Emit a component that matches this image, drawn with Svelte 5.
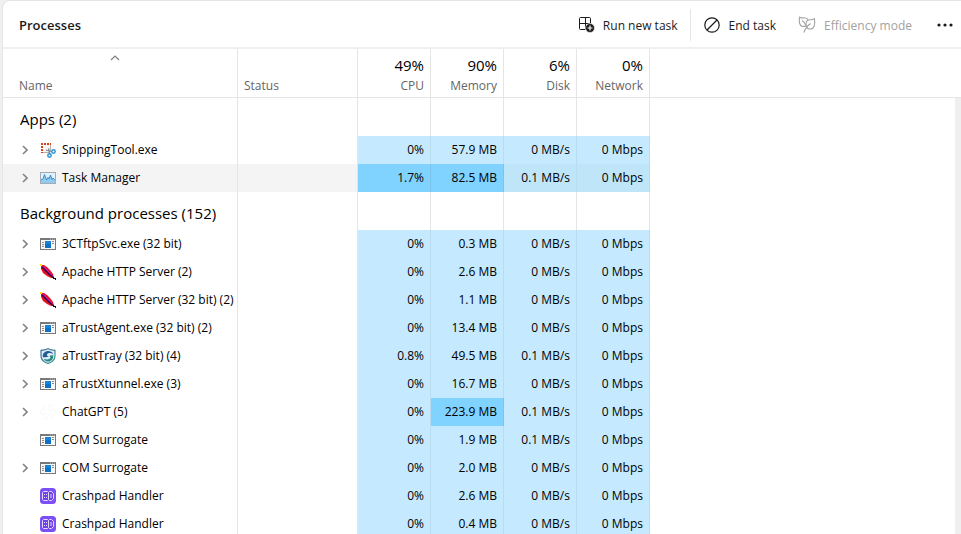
<script>
  const apps = [
    { name: 'SnippingTool.exe', icon: 'snip', open: true, cpu: '0%', mem: '57.9 MB', disk: '0 MB/s', net: '0 Mbps' },
    { name: 'Task Manager', icon: 'taskmgr', open: true, hover: true, hotCpu: true, hotMem: true, cpu: '1.7%', mem: '82.5 MB', disk: '0.1 MB/s', net: '0 Mbps' }
  ];
  const background = [
    { name: '3CTftpSvc.exe (32 bit)', icon: 'exe', open: true, cpu: '0%', mem: '0.3 MB', disk: '0 MB/s', net: '0 Mbps' },
    { name: 'Apache HTTP Server (2)', icon: 'feather', open: true, cpu: '0%', mem: '2.6 MB', disk: '0 MB/s', net: '0 Mbps' },
    { name: 'Apache HTTP Server (32 bit) (2)', icon: 'feather', open: true, cpu: '0%', mem: '1.1 MB', disk: '0 MB/s', net: '0 Mbps' },
    { name: 'aTrustAgent.exe (32 bit) (2)', icon: 'exe', open: true, cpu: '0%', mem: '13.4 MB', disk: '0 MB/s', net: '0 Mbps' },
    { name: 'aTrustTray (32 bit) (4)', icon: 'shield', open: true, cpu: '0.8%', mem: '49.5 MB', disk: '0.1 MB/s', net: '0 Mbps' },
    { name: 'aTrustXtunnel.exe (3)', icon: 'exe', open: true, cpu: '0%', mem: '16.7 MB', disk: '0 MB/s', net: '0 Mbps' },
    { name: 'ChatGPT (5)', icon: 'knot', open: true, hotMem: true, cpu: '0%', mem: '223.9 MB', disk: '0.1 MB/s', net: '0 Mbps' },
    { name: 'COM Surrogate', icon: 'exe', open: false, cpu: '0%', mem: '1.9 MB', disk: '0.1 MB/s', net: '0 Mbps' },
    { name: 'COM Surrogate', icon: 'exe', open: true, cpu: '0%', mem: '2.0 MB', disk: '0 MB/s', net: '0 Mbps' },
    { name: 'Crashpad Handler', icon: 'crash', open: false, cpu: '0%', mem: '2.6 MB', disk: '0 MB/s', net: '0 Mbps' },
    { name: 'Crashpad Handler', icon: 'crash', open: false, cpu: '0%', mem: '0.4 MB', disk: '0 MB/s', net: '0 Mbps' }
  ];
  const groups = [
    { title: 'Apps (2)', rows: apps },
    { title: 'Background processes (152)', rows: background }
  ];
  const metrics = [
    { total: '49%', label: 'CPU' },
    { total: '90%', label: 'Memory' },
    { total: '6%', label: 'Disk' },
    { total: '0%', label: 'Network' }
  ];
</script>

{#snippet icon(kind)}
  <svg class="icon" viewBox="0 0 16 16" aria-hidden="true">
    {#if kind === 'snip'}
      <path d="M2 2h8v8H2z" fill="#f6f6f6" />
      <path d="M10.500 2v7M2 10.500h7" stroke="#b4b4b4" />
      <path d="M1 1h2v2H1zM4 1h2v2H4zM7 1h2v2H7zM10 1h1v2h-1zM1 4h2v2H1zM1 7h2v2H1zM1 10h2v1H1z" fill="#d8401f" />
      <path d="M6 8l7 2M8.500 6.500L10 13" stroke="#7f8b93" stroke-width="1.300" />
      <circle cx="13.500" cy="9.500" r="1.700" fill="#fff" stroke="#2b95d3" stroke-width="1.500" />
      <circle cx="9.500" cy="13.500" r="1.700" fill="#fff" stroke="#2b95d3" stroke-width="1.500" />
    {:else if kind === 'taskmgr'}
      <defs>
        <linearGradient id="tm" x1="0" y1="0" x2="0" y2="1">
          <stop offset="0" stop-color="#7cc6f2" />
          <stop offset="1" stop-color="#7cc0ee" />
        </linearGradient>
      </defs>
      <rect x=".5" y="2.500" width="15" height="11" fill="#e4f1fa" stroke="#a3adb5" />
      <path d="M1 10l2-1 1.500-4.500L6.500 10 8 7.500 9 9l1.500-4L12 9.500l1-1.500 2 2v3H1z" fill="url(#tm)" opacity=".8" />
      <path d="M1 10l2-1 1.500-4.500L6.500 10 8 7.500 9 9l1.500-4L12 9.500l1-1.500 2 2" fill="none" stroke="#2d87cc" stroke-width=".9" />
    {:else if kind === 'exe'}
      <rect x=".5" y="2.500" width="15" height="11" fill="#f7f7f7" stroke="#787878" />
      <path d="M0 2h16v2H0z" fill="#787878" />
      <path d="M10 3h1M12 3h1M14 3h1" stroke="#d9d9d9" stroke-width=".8" />
      <path d="M2 6.500h2M2 8.500h2M2 10.500h2M12 5.500h2M12 7.500h2" stroke="#8d8d8d" />
      <path d="M5 5h6v7H5z" fill="#0f70c4" />
      <path d="M5 5h6v3H5z" fill="#1a83d8" />
    {:else if kind === 'feather'}
      <path d="M1 1h3l3 2 3 3 3 4 1 4-3 0-4-2-4-3-2-4z" fill="#e8121c" />
      <path d="M3 2l9 10" stroke="#e010b0" stroke-width="1.500" />
      <path d="M2 3l4 4 4 4 4 3" fill="none" stroke="#2a0050" stroke-width="1.500" />
      <path d="M13 13h1v1h2v2h-1v-1h-2z" fill="#111" />
      <path d="M0 0h2v2H0z" fill="#ffe500" />
    {:else if kind === 'shield'}
      <defs>
        <linearGradient id="sh" x1="0" y1="0" x2="1" y2="1">
          <stop offset="0" stop-color="#2c5f9e" />
          <stop offset="1" stop-color="#2b9d83" />
        </linearGradient>
      </defs>
      <path d="M8 .6C10 2 12.500 2.200 15 2.400V8c0 4-3.500 6.300-7 7.500C4.500 14.300 1 12 1 8V2.400C3.500 2.200 6 2 8 .6z" fill="#dfeaf1" stroke="url(#sh)" stroke-width="1.100" />
      <path d="M2.800 9C2.300 4.500 6.500 2.500 9.500 3.200c2 .3 3.300 1.500 3.700 3-1.500-1.200-4-1.400-5.400-.6C6.200 6.500 7 8.300 8.800 8.600 6.500 9.600 4 9.500 2.800 9z" fill="#265a96" />
      <path d="M13.200 7.200c.3 4-2.400 6.300-5.200 6.300-2 0-3.600-1.200-4.300-2.800 2 1 4.500 1 5.900.1C11 10 10.500 8.500 9.300 7.900c1.500-.8 3-.8 3.900-.7z" fill="#23877f" />
    {:else if kind === 'knot'}
      <g fill="none" stroke="#f8f8f8">
        {#each [0, 60, 120, 180, 240, 300] as turn}
          <path d="M8 5.500V3.500a3 3 0 0 1 5-1.500" transform="rotate({turn} 8 8)" />
        {/each}
      </g>
    {:else if kind === 'crash'}
      <rect width="16" height="16" rx="3.500" fill="#7b4ff5" />
      <path d="M3.500 3.500h4l1 1v7l-1 1h-4l-1-1v-7z" fill="#6d43e6" stroke="#e4dbff" />
      <path d="M8.500 4.500l1-1h2l2 2v5l-2 2h-2l-1-1z" fill="#6d43e6" stroke="#e4dbff" />
      <path d="M4 6.500h1M6 6.500h1M4 9.500h1M6 9.500h1M11 6v4" stroke="#e4dbff" />
    {/if}
  </svg>
{/snippet}

<main class="window">
  <header class="bar">
    <h1>Processes</h1>
    <button class="tool run" type="button">
      <svg width="18" height="18" viewBox="0 0 18 18" fill="none" stroke="#1b1b1b" aria-hidden="true">
        <path d="M8 13.500H3.500a1 1 0 0 1-1-1v-10a1 1 0 0 1 1-1h9a1 1 0 0 1 1 1V7M8.500 1.500v12M2.500 7.500h11" />
        <circle cx="13" cy="12" r="4.500" fill="#1b1b1b" stroke="#fff" stroke-width=".6" />
        <path d="M13 9.500v5M10.500 12h5" stroke="#fff" stroke-width="1.200" />
      </svg>
      <span>Run new task</span>
    </button>
    <button class="tool end" type="button">
      <svg width="18" height="18" viewBox="0 0 18 18" fill="none" stroke="#1b1b1b" stroke-width="1.200" aria-hidden="true">
        <circle cx="9" cy="9" r="7.200" />
        <path d="M4 14L14 4" />
      </svg>
      <span>End task</span>
    </button>
    <button class="tool eff" type="button" disabled>
      <svg width="18" height="18" viewBox="0 0 18 18" fill="none" stroke="#a2a2a2" stroke-width="1.100" aria-hidden="true">
        <path d="M8 8c0-3 1.800-4.300 4-4.300 1.500 0 3-.3 4.500-1 .6 5 .3 10.300-4.500 10.300-2.300 0-4-1.800-4-5zM6 16.500c1-4 3-6.500 6.500-9" />
        <path d="M10 3.700C9.500 2.500 8.500 2 7 2 5 2 3 2 1.500 1.200 1 5 1 10 5 10.500c1.200.1 2.200-.2 3-1M4 4.500c1.800 1 3 2.500 3.500 4.500" />
      </svg>
      <span>Efficiency mode</span>
    </button>
    <button class="tool more" type="button" aria-label="More options">
      <svg width="18" height="18" viewBox="0 0 18 18" fill="#1b1b1b" aria-hidden="true">
        <circle cx="3" cy="9" r="1.600" /><circle cx="9" cy="9" r="1.600" /><circle cx="15" cy="9" r="1.600" />
      </svg>
    </button>
  </header>

  <table>
    <colgroup>
      <col class="c-name" /><col class="c-status" />
      {#each metrics as m (m.label)}<col class="c-metric" />{/each}
      <col />
    </colgroup>
    <thead>
      <tr>
        <th scope="col" aria-sort="ascending">
          <button class="sort" type="button">
            <svg width="10" height="6" viewBox="0 0 10 6" fill="none" stroke="#808080" stroke-width="1.200" aria-hidden="true"><path d="M1 5l4-4 4 4" /></svg>
            <span>Name</span>
          </button>
        </th>
        <th scope="col"><button class="sort status" type="button">Status</button></th>
        {#each metrics as m (m.label)}
          <th scope="col"><button class="sort metric" type="button"><b>{m.total}</b><span>{m.label}</span></button></th>
        {/each}
        <td class="rest"></td>
      </tr>
    </thead>
    <tbody>
      {#each groups as g (g.title)}
        <tr class="group">
          <th scope="rowgroup">{g.title}</th>
          <td></td><td></td><td></td><td></td><td></td>
          <td class="rest track"></td>
        </tr>
        {#each g.rows as r}
          <tr class:hover={r.hover}>
            <td>
              <div class="proc">
                {#if r.open}
                  <button class="expand" type="button" aria-label="Expand {r.name}">
                    <svg width="6" height="10" viewBox="0 0 6 10" fill="none" stroke="#858585" stroke-width="1.600" aria-hidden="true"><path d="M1 1l4 4-4 4" /></svg>
                  </button>
                {:else}
                  <span class="expand"></span>
                {/if}
                {@render icon(r.icon)}
                <span>{r.name}</span>
              </div>
            </td>
            <td></td>
            <td class="num" class:hot={r.hotCpu}>{r.cpu}</td>
            <td class="num" class:hot={r.hotMem}>{r.mem}</td>
            <td class="num">{r.disk}</td>
            <td class="num">{r.net}</td>
            <td class="rest track"></td>
          </tr>
        {/each}
      {/each}
    </tbody>
  </table>
</main>

<style>
  :global(body) {
    background: #f0f0f0;
    overflow: hidden;
  }
  .window {
    box-sizing: border-box;
    height: 100vh;
    margin-left: 2px;
    padding-top: 1px;
    overflow: hidden;
    font: 12px/16px 'Open Sans', 'Noto Sans', sans-serif;
    color: #000;
    background: #fff;
    border: solid #e5e5e5;
    border-width: 1px 0 0 1px;
    border-top-left-radius: 8px;
  }
  button {
    padding: 0;
    font: inherit;
    color: inherit;
    background: none;
    border: 0;
  }
  svg {
    display: block;
    flex: none;
  }
  .bar {
    display: flex;
    align-items: center;
    height: 45px;
    padding-left: 16px;
    border-bottom: 2px solid #efefef;
    color: #1b1b1b;
  }
  h1 {
    flex: 1;
    margin: 0;
    font-size: 13px;
    font-weight: 600;
  }
  .tool {
    display: flex;
    align-items: center;
    gap: 8px;
    height: 32px;
  }
  .tool span {
    padding-top: 2px;
  }
  .run {
    padding-right: 12px;
    border-right: 1px solid #e5e5e5;
  }
  .end {
    padding: 0 22px 0 12px;
  }
  .eff {
    color: #a2a2a2;
  }
  .more {
    padding: 0 7px 0 24px;
  }
  table {
    width: 100%;
    table-layout: fixed;
    border-spacing: 0;
  }
  .c-name {
    width: 235px;
  }
  .c-status {
    width: 120px;
  }
  .c-metric {
    width: 73px;
  }
  th,
  td {
    box-sizing: border-box;
    height: 28px;
    padding: 0;
    font-weight: 400;
    text-align: left;
    white-space: nowrap;
    border-right: 1px solid #e5e5e5;
  }
  thead th,
  thead td {
    height: 49px;
    border-bottom: 1px solid #e5e5e5;
  }
  .rest {
    border-right: 0;
  }
  .track {
    border-right: 6px solid #efefef;
  }
  .sort {
    display: flex;
    flex-direction: column;
    justify-content: space-between;
    width: 100%;
    height: 48px;
    padding: 6px 6px 3px 16px;
    box-sizing: border-box;
    text-align: left;
    color: #666;
  }
  .sort svg {
    align-self: center;
    margin-right: 20px;
  }
  .status {
    justify-content: flex-end;
    padding-left: 6px;
  }
  .metric {
    align-items: flex-end;
  }
  .metric b {
    font-size: 15px;
    line-height: 20px;
    font-weight: 400;
    color: #000;
  }
  .group th,
  .group td {
    height: 38px;
  }
  .group th {
    padding: 4px 0 0 17px;
    font-size: 15px;
  }
  .proc {
    display: flex;
    align-items: center;
    padding-left: 19px;
  }
  .expand {
    width: 18px;
  }
  .icon {
    width: 16px;
    height: 16px;
    margin-right: 6px;
  }
  .num {
    padding-right: 6px;
    text-align: right;
    background: #c5eaff;
    border-color: #b9dcee;
  }
  .hover td:not(.rest) {
    background-color: #f4f4f4;
  }
  .hover .num:not(.rest) {
    background-color: #bfe5f9;
  }
  .num.hot,
  .hover .num.hot:not(.rest) {
    background-color: #80d2ff;
    border-color: #7bc5ed;
  }
</style>
